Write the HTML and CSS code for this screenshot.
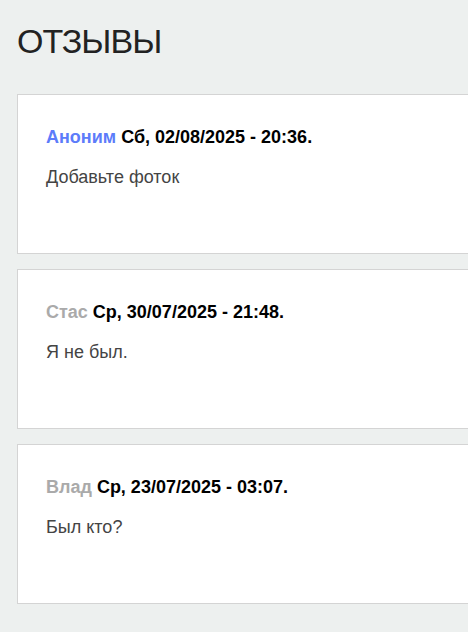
FILE: index.html
```html
<!DOCTYPE html>
<html lang="ru">
<head>
<meta charset="utf-8">
<link rel="stylesheet" href="styles.css">
</head>
<body>
<div class="page">
  <h1 class="title">ОТЗЫВЫ</h1>
  <div class="reviews">
    <div class="card">
      <div class="meta"><span class="name name-blue">Аноним</span> Сб, 02/08/2025 - 20:36.</div>
      <div class="text">Добавьте фоток</div>
    </div>
    <div class="card">
      <div class="meta"><span class="name">Стас</span> Ср, 30/07/2025 - 21:48.</div>
      <div class="text">Я не был.</div>
    </div>
    <div class="card">
      <div class="meta"><span class="name">Влад</span> Ср, 23/07/2025 - 03:07.</div>
      <div class="text">Был кто?</div>
    </div>
  </div>
</div>
</body>
</html>
```
FILE: styles.css
```css
html, body {
  margin: 0;
  padding: 0;
  background: #edf0ef;
  overflow: hidden;
}
body {
  font-family: "Liberation Sans", Arial, sans-serif;
}
.page {
  padding: 21px 0 0 17px;
}
.title {
  margin: 0 0 32px 0;
  font-size: 34px;
  font-weight: normal;
  line-height: 41px;
  letter-spacing: -1px;
  color: #222;
}
.reviews {
  display: flex;
  flex-direction: column;
  gap: 15px;
  margin-right: -60px;
}
.card {
  box-sizing: border-box;
  height: 160px;
  background: #fff;
  border: 1px solid #d4d4d4;
  padding: 32px 28px 0 28px;
}
.meta {
  font-size: 18px;
  line-height: 21px;
  font-weight: bold;
  color: #000;
}
.name {
  color: #aaaaaa;
}
.name-blue {
  color: #5c7cfa;
}
.text {
  margin-top: 19px;
  font-size: 18px;
  line-height: 21px;
  color: #444;
}
```
